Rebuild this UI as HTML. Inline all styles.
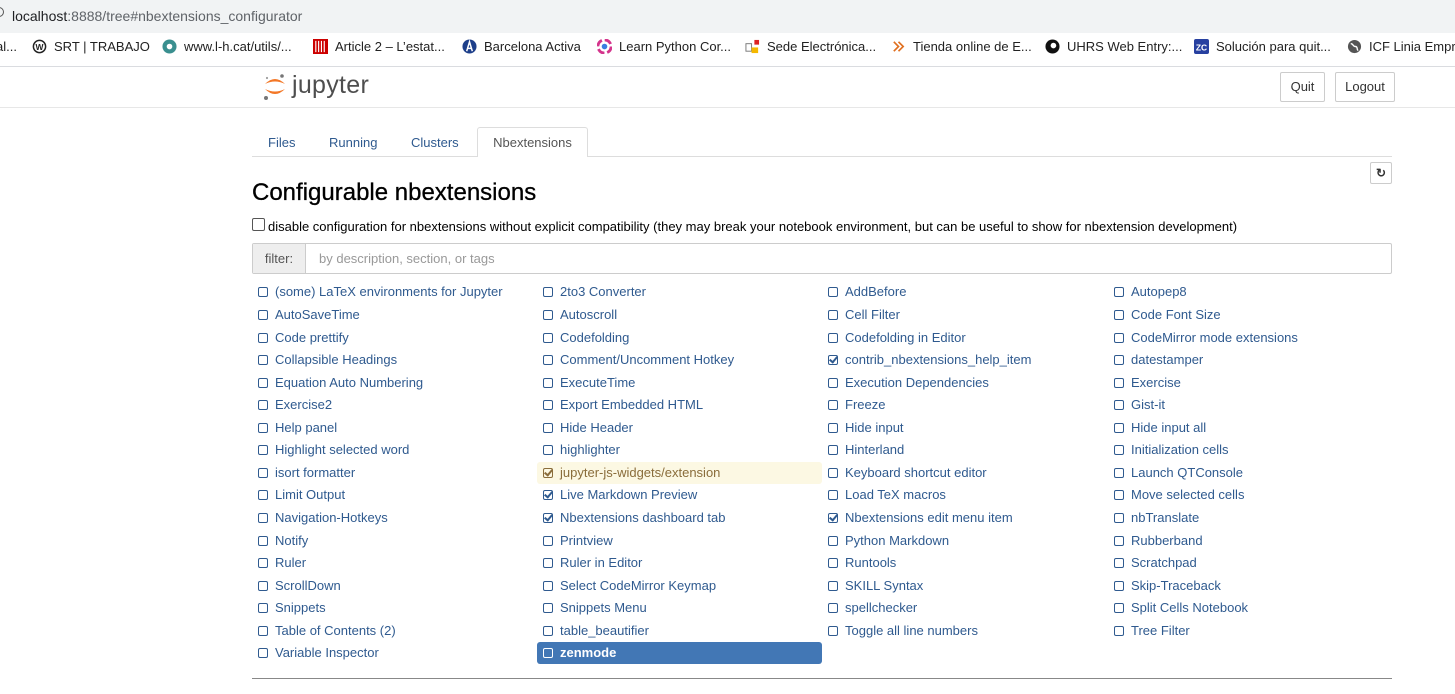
<!DOCTYPE html>
<html><head><meta charset="utf-8">
<style>
*{box-sizing:border-box;margin:0;padding:0}
body{width:1455px;height:694px;overflow:hidden;background:#fff;font-family:"Liberation Sans",Arial,sans-serif;position:relative;color:#000}
.a{position:absolute;white-space:nowrap}
.bm{position:absolute;top:39px;font-size:13px;color:#222;display:flex;align-items:center;gap:7px;white-space:nowrap}
.ic{width:15px;height:15px;display:inline-block;flex:none}
.it{position:absolute;font-size:13px;color:#2f5a8f;height:22px;line-height:22px;padding-left:23px;white-space:nowrap}
.cb{position:absolute;left:6px;top:6px;width:10px;height:10px;border:1.2px solid #2f5a8f;border-radius:2px}
.ck::after{content:"";position:absolute;left:2px;top:-1px;width:3px;height:6px;border:solid currentColor;border-width:0 2px 2px 0;transform:rotate(40deg)}
.ck{color:#2f5a8f}
.btn{position:absolute;top:72px;height:30px;border:1px solid #ccc;border-radius:2px;font-size:13px;line-height:28px;text-align:center;color:#333;background:#fff}
</style></head><body>
<div class="a" style="left:0;top:0;width:1455px;height:33px;background:#f1f3f4"></div>
<div class="a" style="left:-6px;top:7px;width:10px;height:10px;border:1.5px solid #555;border-radius:50%"></div>
<div class="a" style="left:12px;top:8px;font-size:14px;color:#202124">localhost<span style="color:#5f6368">:8888/tree#nbextensions_configurator</span></div>
<div class="a" style="left:0;top:66px;width:1455px;height:1px;background:#dadce0"></div>
<div class="bm" style="left:-4px">al...</div>
<div class="bm" style="left:32px"><svg class="ic" viewBox="0 0 16 16"><circle cx="8" cy="8" r="6.5" fill="none" stroke="#222" stroke-width="1.6"/><text x="8" y="11.5" font-size="9" text-anchor="middle" font-weight="bold" fill="#222">W</text></svg>SRT | TRABAJO</div>
<div class="bm" style="left:162px"><svg class="ic" viewBox="0 0 16 16"><circle cx="8" cy="8" r="7.5" fill="#3a8f8f"/><circle cx="8" cy="8" r="3" fill="#fff"/></svg>www.l-h.cat/utils/...</div>
<div class="bm" style="left:313px"><svg class="ic" viewBox="0 0 16 16"><rect width="16" height="16" fill="#c00"/><path d="M3 2v12M6 2v12M9 2v12M12 2v12" stroke="#fff" stroke-width="1.2"/></svg>Article 2 – L’estat...</div>
<div class="bm" style="left:462px"><svg class="ic" viewBox="0 0 16 16"><circle cx="8" cy="8" r="7.5" fill="#1d3f8a"/><path d="M5 13L8 3l3 10M6 10h4" stroke="#fff" stroke-width="1.6" fill="none"/></svg>Barcelona Activa</div>
<div class="bm" style="left:597px"><svg class="ic" viewBox="0 0 16 16"><circle cx="8" cy="8" r="7" fill="none" stroke="#d4348c" stroke-width="3" stroke-dasharray="8 3"/><circle cx="8" cy="8" r="3" fill="#3a7de0"/></svg>Learn Python Cor...</div>
<div class="bm" style="left:745px"><svg class="ic" viewBox="0 0 16 16"><rect x="1" y="5" width="6" height="8" fill="none" stroke="#777"/><rect x="7" y="9" width="7" height="6" fill="#f5b800"/><rect x="10" y="1" width="5" height="5" fill="#d22"/></svg>Sede Electrónica...</div>
<div class="bm" style="left:891px"><svg class="ic" viewBox="0 0 16 16"><path d="M3 3l5 5-5 5M8 3l5 5-5 5" stroke="#e07020" stroke-width="1.8" fill="none"/></svg>Tienda online de E...</div>
<div class="bm" style="left:1045px"><svg class="ic" viewBox="0 0 16 16"><circle cx="8" cy="8" r="7.5" fill="#111"/><circle cx="9" cy="7" r="3" fill="#fff"/></svg>UHRS Web Entry:...</div>
<div class="bm" style="left:1194px"><svg class="ic" viewBox="0 0 16 16"><rect width="16" height="16" rx="2" fill="#2740a0"/><text x="8" y="12" font-size="9" font-weight="bold" text-anchor="middle" fill="#fff">ZC</text></svg>Solución para quit...</div>
<div class="bm" style="left:1347px"><svg class="ic" viewBox="0 0 16 16"><circle cx="8" cy="8" r="7" fill="#555"/><path d="M4 5c3 0 2 3 5 3s1 4 3 4" stroke="#fff" stroke-width="1.5" fill="none"/></svg>ICF Linia Empre</div>

<svg class="a" style="left:262px;top:72px" width="26" height="30" viewBox="0 0 26 30">
<path d="M3 12 Q13 2 23 12 Q13 7 3 12Z" fill="#f37726"/>
<path d="M3 17 Q13 27 23 17 Q13 22 3 17Z" fill="#f37726"/>
<circle cx="20" cy="4" r="1.8" fill="#767677"/><circle cx="4" cy="26" r="2" fill="#767677"/><circle cx="5" cy="6" r="1.1" fill="#9e9e9e"/>
</svg>
<div class="a" style="left:292px;top:71px;font-size:25px;color:#4e4e4e;letter-spacing:0.3px">jupyter</div>
<div class="btn" style="left:1280px;width:45px">Quit</div>
<div class="btn" style="left:1335px;width:60px">Logout</div>
<div class="a" style="left:0;top:107px;width:1455px;height:1px;background:#e7e7e7"></div>

<div class="a" style="left:252px;top:156px;width:1140px;height:1px;background:#ddd"></div>
<div class="a" style="left:268px;top:135px;font-size:13px;color:#2f5a8f">Files</div>
<div class="a" style="left:329px;top:135px;font-size:13px;color:#2f5a8f">Running</div>
<div class="a" style="left:411px;top:135px;font-size:13px;color:#2f5a8f">Clusters</div>
<div class="a" style="left:477px;top:127px;width:111px;height:30px;border:1px solid #ddd;border-bottom:none;background:#fff;border-radius:3px 3px 0 0;font-size:13px;color:#555;text-align:center;line-height:29px">Nbextensions</div>
<div class="a" style="left:1370px;top:162px;width:22px;height:22px;border:1px solid #ccc;border-radius:2px;text-align:center;line-height:20px;font-size:12px;color:#333;font-weight:bold">&#x21bb;</div>

<div class="a" style="left:252px;top:179px;font-size:24px;color:#000;-webkit-text-stroke:0.3px #000">Configurable nbextensions</div>
<div class="a" style="left:252px;top:218px;width:13px;height:13px;border:1px solid #555;border-radius:2px"></div>
<div class="a" style="left:268px;top:219px;font-size:13px;color:#000">disable configuration for nbextensions without explicit compatibility (they may break your notebook environment, but can be useful to show for nbextension development)</div>

<div class="a" style="left:252px;top:243px;width:1140px;height:31px;border:1px solid #ccc;border-radius:2px"></div>
<div class="a" style="left:253px;top:244px;width:53px;height:29px;background:#eee;border-right:1px solid #ccc;font-size:13px;color:#555;line-height:29px;text-align:center">filter:</div>
<div class="a" style="left:319px;top:251px;font-size:13px;color:#999">by description, section, or tags</div>

<div class="a" style="left:537px;top:462px;width:285px;height:22px;background:#fcf8e3;border-radius:3px"></div>
<div class="a" style="left:537px;top:642px;width:285px;height:22px;background:#4277b5;border-radius:3px"></div>
<div class="a" style="left:252px;top:678px;width:1140px;height:1px;background:#888"></div>

<div class="it" style="left:252px;top:281px"><span class="cb"></span>(some) LaTeX environments for Jupyter</div>
<div class="it" style="left:537px;top:281px"><span class="cb"></span>2to3 Converter</div>
<div class="it" style="left:822px;top:281px"><span class="cb"></span>AddBefore</div>
<div class="it" style="left:1108px;top:281px"><span class="cb"></span>Autopep8</div>
<div class="it" style="left:252px;top:304px"><span class="cb"></span>AutoSaveTime</div>
<div class="it" style="left:537px;top:304px"><span class="cb"></span>Autoscroll</div>
<div class="it" style="left:822px;top:304px"><span class="cb"></span>Cell Filter</div>
<div class="it" style="left:1108px;top:304px"><span class="cb"></span>Code Font Size</div>
<div class="it" style="left:252px;top:327px"><span class="cb"></span>Code prettify</div>
<div class="it" style="left:537px;top:327px"><span class="cb"></span>Codefolding</div>
<div class="it" style="left:822px;top:327px"><span class="cb"></span>Codefolding in Editor</div>
<div class="it" style="left:1108px;top:327px"><span class="cb"></span>CodeMirror mode extensions</div>
<div class="it" style="left:252px;top:349px"><span class="cb"></span>Collapsible Headings</div>
<div class="it" style="left:537px;top:349px"><span class="cb"></span>Comment/Uncomment Hotkey</div>
<div class="it" style="left:822px;top:349px"><span class="cb ck"></span>contrib_nbextensions_help_item</div>
<div class="it" style="left:1108px;top:349px"><span class="cb"></span>datestamper</div>
<div class="it" style="left:252px;top:372px"><span class="cb"></span>Equation Auto Numbering</div>
<div class="it" style="left:537px;top:372px"><span class="cb"></span>ExecuteTime</div>
<div class="it" style="left:822px;top:372px"><span class="cb"></span>Execution Dependencies</div>
<div class="it" style="left:1108px;top:372px"><span class="cb"></span>Exercise</div>
<div class="it" style="left:252px;top:394px"><span class="cb"></span>Exercise2</div>
<div class="it" style="left:537px;top:394px"><span class="cb"></span>Export Embedded HTML</div>
<div class="it" style="left:822px;top:394px"><span class="cb"></span>Freeze</div>
<div class="it" style="left:1108px;top:394px"><span class="cb"></span>Gist-it</div>
<div class="it" style="left:252px;top:417px"><span class="cb"></span>Help panel</div>
<div class="it" style="left:537px;top:417px"><span class="cb"></span>Hide Header</div>
<div class="it" style="left:822px;top:417px"><span class="cb"></span>Hide input</div>
<div class="it" style="left:1108px;top:417px"><span class="cb"></span>Hide input all</div>
<div class="it" style="left:252px;top:439px"><span class="cb"></span>Highlight selected word</div>
<div class="it" style="left:537px;top:439px"><span class="cb"></span>highlighter</div>
<div class="it" style="left:822px;top:439px"><span class="cb"></span>Hinterland</div>
<div class="it" style="left:1108px;top:439px"><span class="cb"></span>Initialization cells</div>
<div class="it" style="left:252px;top:462px"><span class="cb"></span>isort formatter</div>
<div class="it" style="left:537px;top:462px;color:#8a6d3b"><span class="cb ck" style="border-color:#8a6d3b;color:#8a6d3b"></span>jupyter-js-widgets/extension</div>
<div class="it" style="left:822px;top:462px"><span class="cb"></span>Keyboard shortcut editor</div>
<div class="it" style="left:1108px;top:462px"><span class="cb"></span>Launch QTConsole</div>
<div class="it" style="left:252px;top:484px"><span class="cb"></span>Limit Output</div>
<div class="it" style="left:537px;top:484px"><span class="cb ck"></span>Live Markdown Preview</div>
<div class="it" style="left:822px;top:484px"><span class="cb"></span>Load TeX macros</div>
<div class="it" style="left:1108px;top:484px"><span class="cb"></span>Move selected cells</div>
<div class="it" style="left:252px;top:507px"><span class="cb"></span>Navigation-Hotkeys</div>
<div class="it" style="left:537px;top:507px"><span class="cb ck"></span>Nbextensions dashboard tab</div>
<div class="it" style="left:822px;top:507px"><span class="cb ck"></span>Nbextensions edit menu item</div>
<div class="it" style="left:1108px;top:507px"><span class="cb"></span>nbTranslate</div>
<div class="it" style="left:252px;top:530px"><span class="cb"></span>Notify</div>
<div class="it" style="left:537px;top:530px"><span class="cb"></span>Printview</div>
<div class="it" style="left:822px;top:530px"><span class="cb"></span>Python Markdown</div>
<div class="it" style="left:1108px;top:530px"><span class="cb"></span>Rubberband</div>
<div class="it" style="left:252px;top:552px"><span class="cb"></span>Ruler</div>
<div class="it" style="left:537px;top:552px"><span class="cb"></span>Ruler in Editor</div>
<div class="it" style="left:822px;top:552px"><span class="cb"></span>Runtools</div>
<div class="it" style="left:1108px;top:552px"><span class="cb"></span>Scratchpad</div>
<div class="it" style="left:252px;top:575px"><span class="cb"></span>ScrollDown</div>
<div class="it" style="left:537px;top:575px"><span class="cb"></span>Select CodeMirror Keymap</div>
<div class="it" style="left:822px;top:575px"><span class="cb"></span>SKILL Syntax</div>
<div class="it" style="left:1108px;top:575px"><span class="cb"></span>Skip-Traceback</div>
<div class="it" style="left:252px;top:597px"><span class="cb"></span>Snippets</div>
<div class="it" style="left:537px;top:597px"><span class="cb"></span>Snippets Menu</div>
<div class="it" style="left:822px;top:597px"><span class="cb"></span>spellchecker</div>
<div class="it" style="left:1108px;top:597px"><span class="cb"></span>Split Cells Notebook</div>
<div class="it" style="left:252px;top:620px"><span class="cb"></span>Table of Contents (2)</div>
<div class="it" style="left:537px;top:620px"><span class="cb"></span>table_beautifier</div>
<div class="it" style="left:822px;top:620px"><span class="cb"></span>Toggle all line numbers</div>
<div class="it" style="left:1108px;top:620px"><span class="cb"></span>Tree Filter</div>
<div class="it" style="left:252px;top:642px"><span class="cb"></span>Variable Inspector</div>
<div class="it" style="left:537px;top:642px;color:#fff;font-weight:bold"><span class="cb" style="border-color:#fff"></span>zenmode</div>
</body></html>
